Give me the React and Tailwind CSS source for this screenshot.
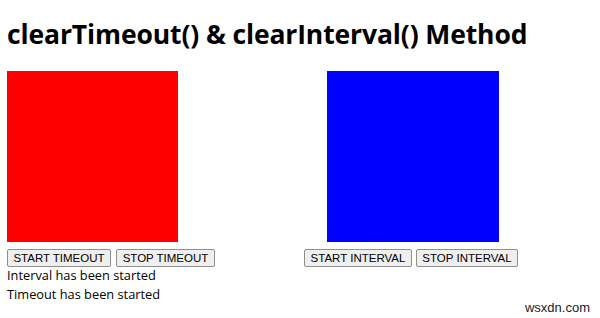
export default function App() {
  return (
    <div className="w-[600px] h-[318px] bg-white text-black px-[7px] relative" style={{ fontFamily: '"Open Sans", "Noto Sans", sans-serif' }}>
      <h1 className="pt-[17px] text-[26.5px] font-bold leading-[34px] tracking-[-0.12px]">
        clearTimeout() &amp; clearInterval() Method
      </h1>
      <div className="flex mt-[20px]">
        <div className="w-[297px] flex flex-col items-start">
          <div className="w-[171px] h-[171px] bg-[#ff0000]"></div>
          <div className="flex gap-[5px] mt-[7px]">
            <Btn w="w-[104px]">START TIMEOUT</Btn>
            <Btn w="w-[99px]">STOP TIMEOUT</Btn>
          </div>
          <div className="text-[12.8px] leading-[19px] -mt-[1px]">
            <div>Interval has been started</div>
            <div>Timeout has been started</div>
          </div>
        </div>
        <div className="flex flex-col items-start">
          <div className="ml-[23px] w-[172px] h-[171px] bg-[#0000ff]"></div>
          <div className="flex gap-[4px] mt-[7px]">
            <Btn w="w-[108px]">START INTERVAL</Btn>
            <Btn w="w-[102px]">STOP INTERVAL</Btn>
          </div>
        </div>
      </div>
      <div className="absolute right-[10px] bottom-[1px] text-[13px] text-[#222]" style={{ fontFamily: '"Liberation Sans", sans-serif' }}>
        wsxdn.com
      </div>
    </div>
  );
}

function Btn({ w, children }) {
  return (
    <button
      className={`${w} h-[18px] bg-[#efefef] border border-[#8f8f8f] rounded-[2px] text-[11.5px] leading-[16px] text-black text-center whitespace-nowrap`}
      style={{ fontFamily: '"Liberation Sans", Arial, sans-serif' }}
    >
      {children}
    </button>
  );
}
